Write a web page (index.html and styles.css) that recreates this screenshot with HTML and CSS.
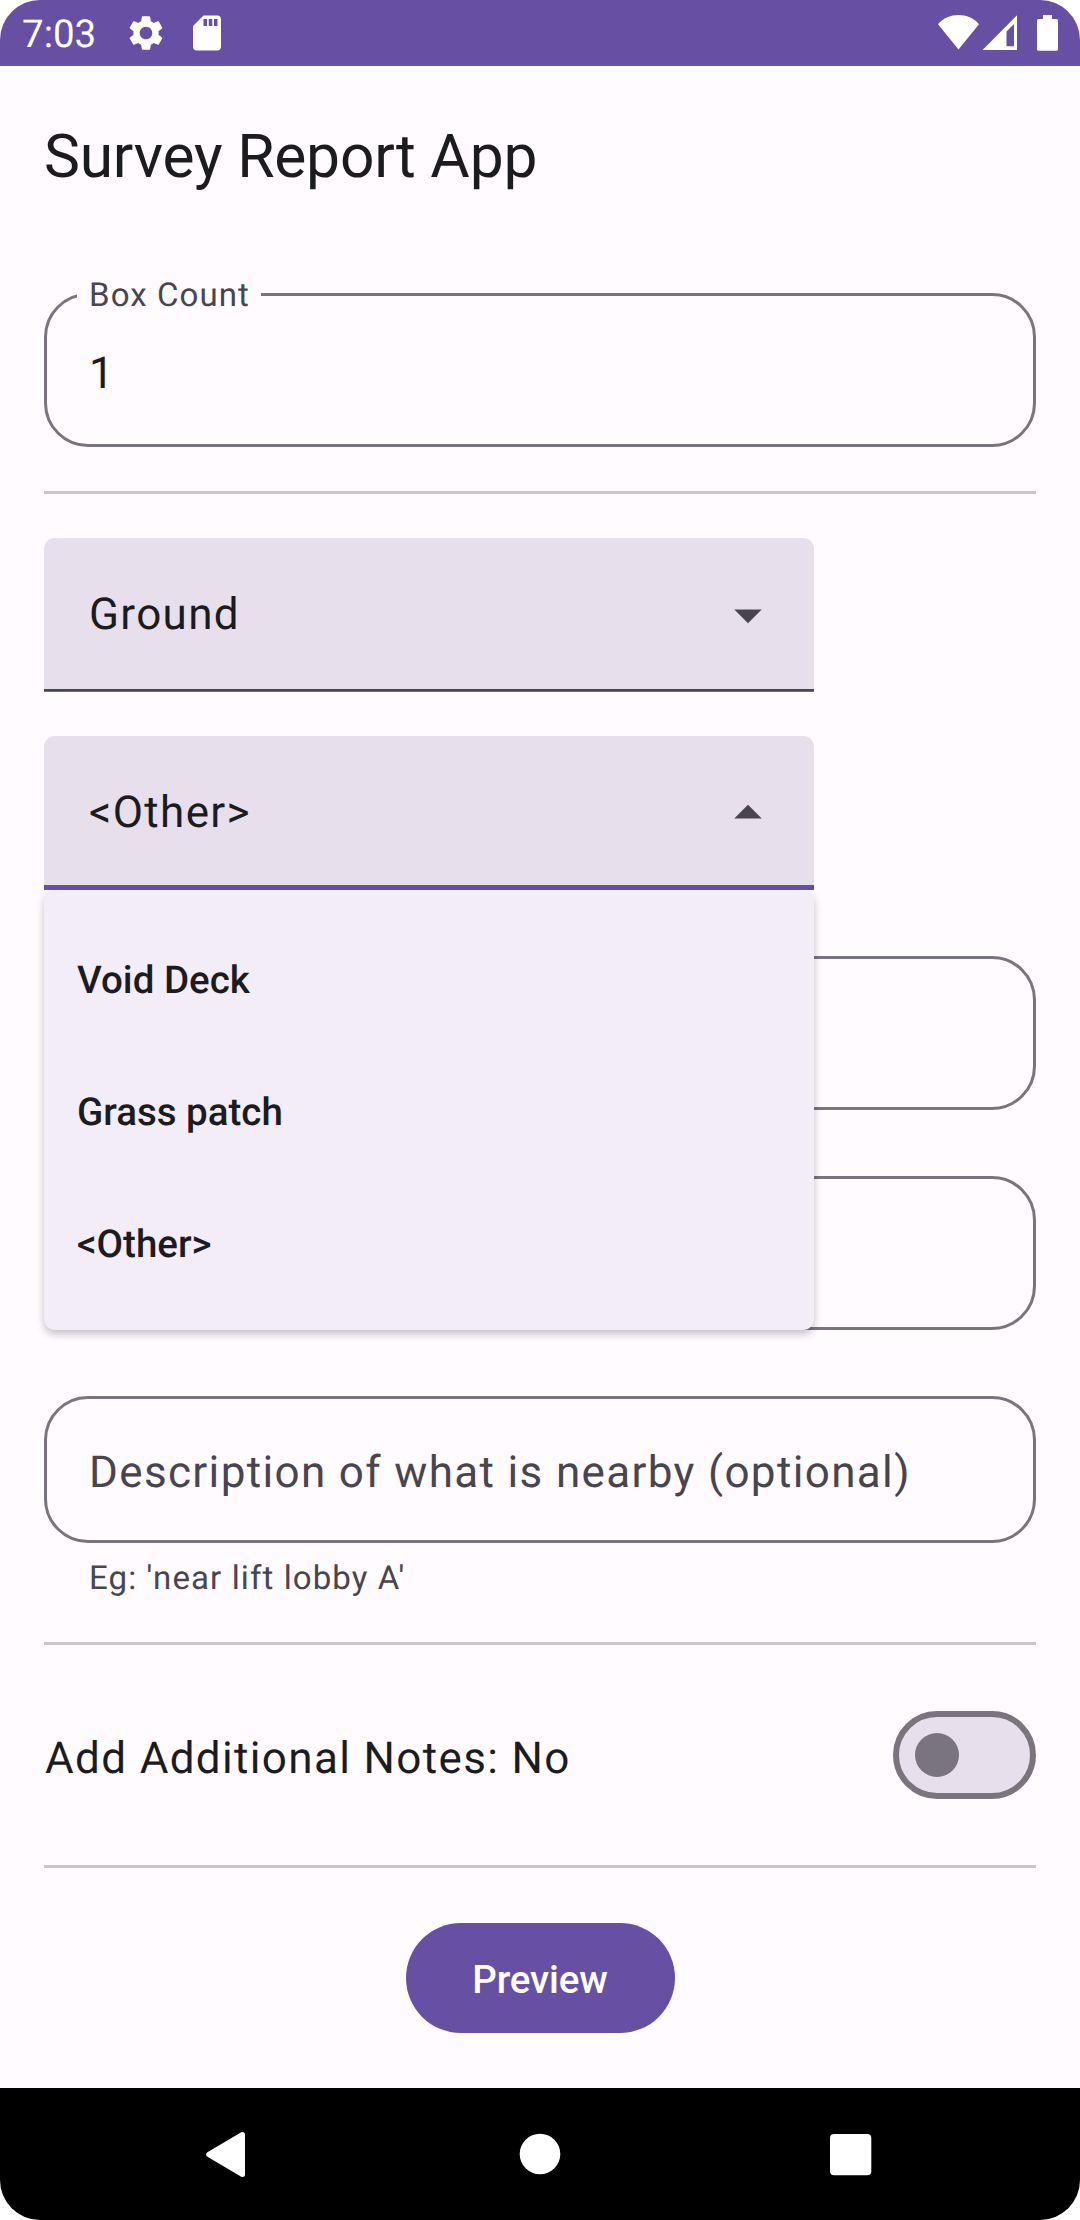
FILE: index.html
```html
<!DOCTYPE html>
<html lang="en">
<head>
<meta charset="utf-8">
<title>Survey Report App</title>
<link rel="stylesheet" href="styles.css">
</head>
<body>
<div class="device">
  <header class="status-bar">
    <div class="status-left">
      <span class="clock">7:03</span>
      <svg class="status-gear" viewBox="0 0 24 24"><path fill="currentColor" d="M19.14 12.94c.04-.3.06-.61.06-.94 0-.32-.02-.64-.07-.94l2.03-1.58c.18-.14.23-.41.12-.61l-1.92-3.32c-.12-.22-.37-.29-.59-.22l-2.39.96c-.5-.38-1.03-.7-1.62-.94l-.36-2.54c-.04-.24-.24-.41-.48-.41h-3.84c-.24 0-.43.17-.47.41l-.36 2.54c-.59.24-1.13.57-1.62.94l-2.39-.96c-.22-.08-.47 0-.59.22L2.74 8.87c-.12.21-.08.47.12.61l2.03 1.58c-.05.3-.09.63-.09.94s.02.64.07.94l-2.03 1.58c-.18.14-.23.41-.12.61l1.92 3.32c.12.22.37.29.59.22l2.39-.96c.5.38 1.03.7 1.62.94l.36 2.54c.05.24.24.41.48.41h3.84c.24 0 .44-.17.47-.41l.36-2.54c.59-.24 1.13-.56 1.62-.94l2.39.96c.22.08.47 0 .59-.22l1.92-3.32c.12-.22.07-.47-.12-.61l-2.01-1.58zM12 15.6c-1.98 0-3.6-1.62-3.6-3.6s1.62-3.6 3.6-3.6 3.6 1.62 3.6 3.6-1.62 3.6-3.6 3.6z"/></svg>
      <svg class="status-sd" viewBox="0 0 24 24"><path fill="currentColor" d="M18 2h-8L4.02 8 4 20c0 1.1.9 2 2 2h12c1.1 0 2-.9 2-2V4c0-1.1-.9-2-2-2zm-6 6h-2V4h2v4zm3 0h-2V4h2v4zm3 0h-2V4h2v4z"/></svg>
    </div>
    <svg class="status-right" viewBox="0 0 124 38">
      <path fill="currentColor" d="M0 11.2C5 5 13 2 20.5 2S36 5 41 11.2L20.500 36.500z"/>
      <path fill="currentColor" fill-rule="evenodd" d="M79 2.200V37H44.500zM76 11L68.500 18.500V33.300H76z"/>
      <path fill="currentColor" d="M105 2h9v4h4.500a1.500 1.500 0 0 1 1.500 1.500v28.700a1.500 1.500 0 0 1-1.500 1.500h-18a1.500 1.500 0 0 1-1.500-1.500V7.500a1.500 1.500 0 0 1 1.500-1.500h4.500z"/>
    </svg>
  </header>

  <h1 class="title">Survey Report App</h1>

  <main class="form">
    <div class="outlined box-count">
      <span class="field-label">Box Count</span>
      <span class="field-value">1</span>
    </div>
    <hr class="divider after-count">

    <div class="select level">
      <span class="select-value">Ground</span>
      <svg class="arrow" viewBox="0 0 24 24"><path fill="currentColor" d="M7 10l5 5 5-5z"/></svg>
    </div>

    <div class="select location open">
      <span class="select-value">&lt;Other&gt;</span>
      <svg class="arrow" viewBox="0 0 24 24"><path fill="currentColor" d="M7 14l5-5 5 5z"/></svg>
      <ul class="menu">
        <li class="menu-item">Void Deck</li>
        <li class="menu-item">Grass patch</li>
        <li class="menu-item">&lt;Other&gt;</li>
      </ul>
    </div>

    <div class="outlined covered"></div>
    <div class="outlined covered"></div>

    <div class="outlined description"><span class="placeholder">Description of what is nearby (optional)</span></div>
    <p class="helper">Eg: 'near lift lobby A'</p>
    <hr class="divider">

    <div class="notes">
      <span class="notes-label">Add Additional Notes: No</span>
      <span class="switch"><span class="thumb"></span></span>
    </div>
    <hr class="divider">

    <button class="preview" type="button">Preview</button>
  </main>

  <nav class="nav-bar">
    <svg class="nav-icon" viewBox="0 0 60 60"><path fill="#fff" stroke="#fff" stroke-width="5" stroke-linejoin="round" d="M8.700 30.500L42.500 10.500V50.500z"/></svg>
    <svg class="nav-icon" viewBox="0 0 60 60"><circle cx="30" cy="30" r="20.300" fill="#fff"/></svg>
    <svg class="nav-icon" viewBox="0 0 60 60"><rect x="10" y="10" width="41.300" height="41.300" rx="4" fill="#fff"/></svg>
  </nav>
</div>
</body>
</html>
```
FILE: styles.css
```css
* {
  box-sizing: border-box;
}

body {
  margin: 0;
  background: #fff;
  font-family: Roboto, "Noto Sans", sans-serif;
  color: #1c1b1f;
  text-rendering: geometricPrecision;
}

.device {
  width: 1080px;
  height: 2220px;
  display: flex;
  flex-direction: column;
  background: #fffbfe;
  border-radius: 40px;
  overflow: hidden;
}

.status-bar {
  height: 66px;
  flex: none;
  display: flex;
  justify-content: space-between;
  padding: 0 18px 0 22px;
  background: #6750a4;
  color: #fff;
}

.status-left {
  display: flex;
  align-items: center;
}

.clock {
  width: 103px;
  padding-top: 3px;
  font-size: 38.5px;
  line-height: 66px;
}

.status-gear,
.status-sd {
  width: 42px;
  height: 42px;
}

.status-sd {
  margin-left: 19px;
}

.status-right {
  width: 124px;
  height: 38px;
  margin-top: 13px;
}

.title {
  flex: none;
  height: 181px;
  margin: 0;
  padding: 0 44px;
  font-size: 60.5px;
  font-weight: 400;
  line-height: 181px;
  letter-spacing: -0.2px;
}

.form {
  flex: 1;
  display: flex;
  flex-direction: column;
  padding: 46px 44px 0;
  font-size: 44px;
  letter-spacing: 1.35px;
}

.outlined {
  position: relative;
  flex: none;
  display: flex;
  align-items: center;
  height: 154px;
  padding: 6px 42px 0;
  border: 3px solid #79747e;
  border-radius: 44px;
}

.field-label {
  position: absolute;
  top: -20px;
  left: 30px;
  width: 184px;
  padding-left: 12px;
  background: #fffbfe;
  color: #49454f;
  font-size: 33px;
  line-height: 40px;
  letter-spacing: 1.1px;
}

.divider {
  flex: none;
  width: 100%;
  height: 3px;
  margin: 0;
  border: 0;
  background: #cac4d0;
}

.after-count {
  margin: 44px 0;
}

.select {
  position: relative;
  flex: none;
  display: flex;
  align-items: center;
  justify-content: space-between;
  width: 770px;
  height: 154px;
  padding: 0 33px 0 45px;
  background: linear-gradient(#49454f, #49454f) bottom / 100% 2.75px no-repeat #e7e0ec;
  border-radius: 11px 11px 0 0;
}

.select.open {
  margin-top: 44px;
  background: linear-gradient(#6750a4, #6750a4) bottom / 100% 5.5px no-repeat #e7e0ec;
}

.select-value {
  margin-top: -3px;
}

.arrow {
  width: 66px;
  height: 66px;
  color: #49454f;
}

.menu {
  position: absolute;
  z-index: 2;
  top: 154px;
  left: 0;
  width: 770px;
  margin: 0;
  padding: 22px 0;
  list-style: none;
  background: #f3edf7;
  border-radius: 11px;
  box-shadow: 0 4px 9px rgba(0, 0, 0, 0.24);
  clip-path: inset(0 -30px -30px -30px);
}

.menu-item {
  height: 132px;
  padding: 3px 33px 0;
  font-size: 38.5px;
  font-weight: 500;
  line-height: 132px;
  letter-spacing: 0;
}

.covered {
  margin-top: 66px;
}

.description {
  height: 147px;
  margin-top: 66px;
  padding-top: 5px;
  color: #49454f;
}

.helper {
  flex: none;
  height: 99px;
  margin: 0;
  padding: 12px 45px 0;
  color: #49454f;
  font-size: 33px;
  line-height: 48px;
  letter-spacing: 1.1px;
}

.notes {
  flex: none;
  height: 220px;
  display: flex;
  align-items: center;
  justify-content: space-between;
}

.notes-label {
  padding: 6px 0 0 1px;
}

.switch {
  display: flex;
  align-items: center;
  width: 143px;
  height: 88px;
  padding-left: 16px;
  border: 6px solid #79747e;
  border-radius: 44px;
  background: #e7e0ec;
}

.thumb {
  width: 44px;
  height: 44px;
  border-radius: 50%;
  background: #79747e;
}

.preview {
  flex: none;
  align-self: center;
  width: 269px;
  height: 110px;
  margin-top: 55px;
  padding: 3px 0 0;
  border: 0;
  border-radius: 55px;
  background: #6750a4;
  color: #fff;
  font: 500 38.5px Roboto, "Noto Sans", sans-serif;
  letter-spacing: -0.1px;
}

.nav-bar {
  flex: none;
  display: flex;
  align-items: center;
  justify-content: center;
  gap: 250px;
  height: 132px;
  background: #000;
}

.nav-icon {
  width: 60px;
  height: 60px;
}
```
